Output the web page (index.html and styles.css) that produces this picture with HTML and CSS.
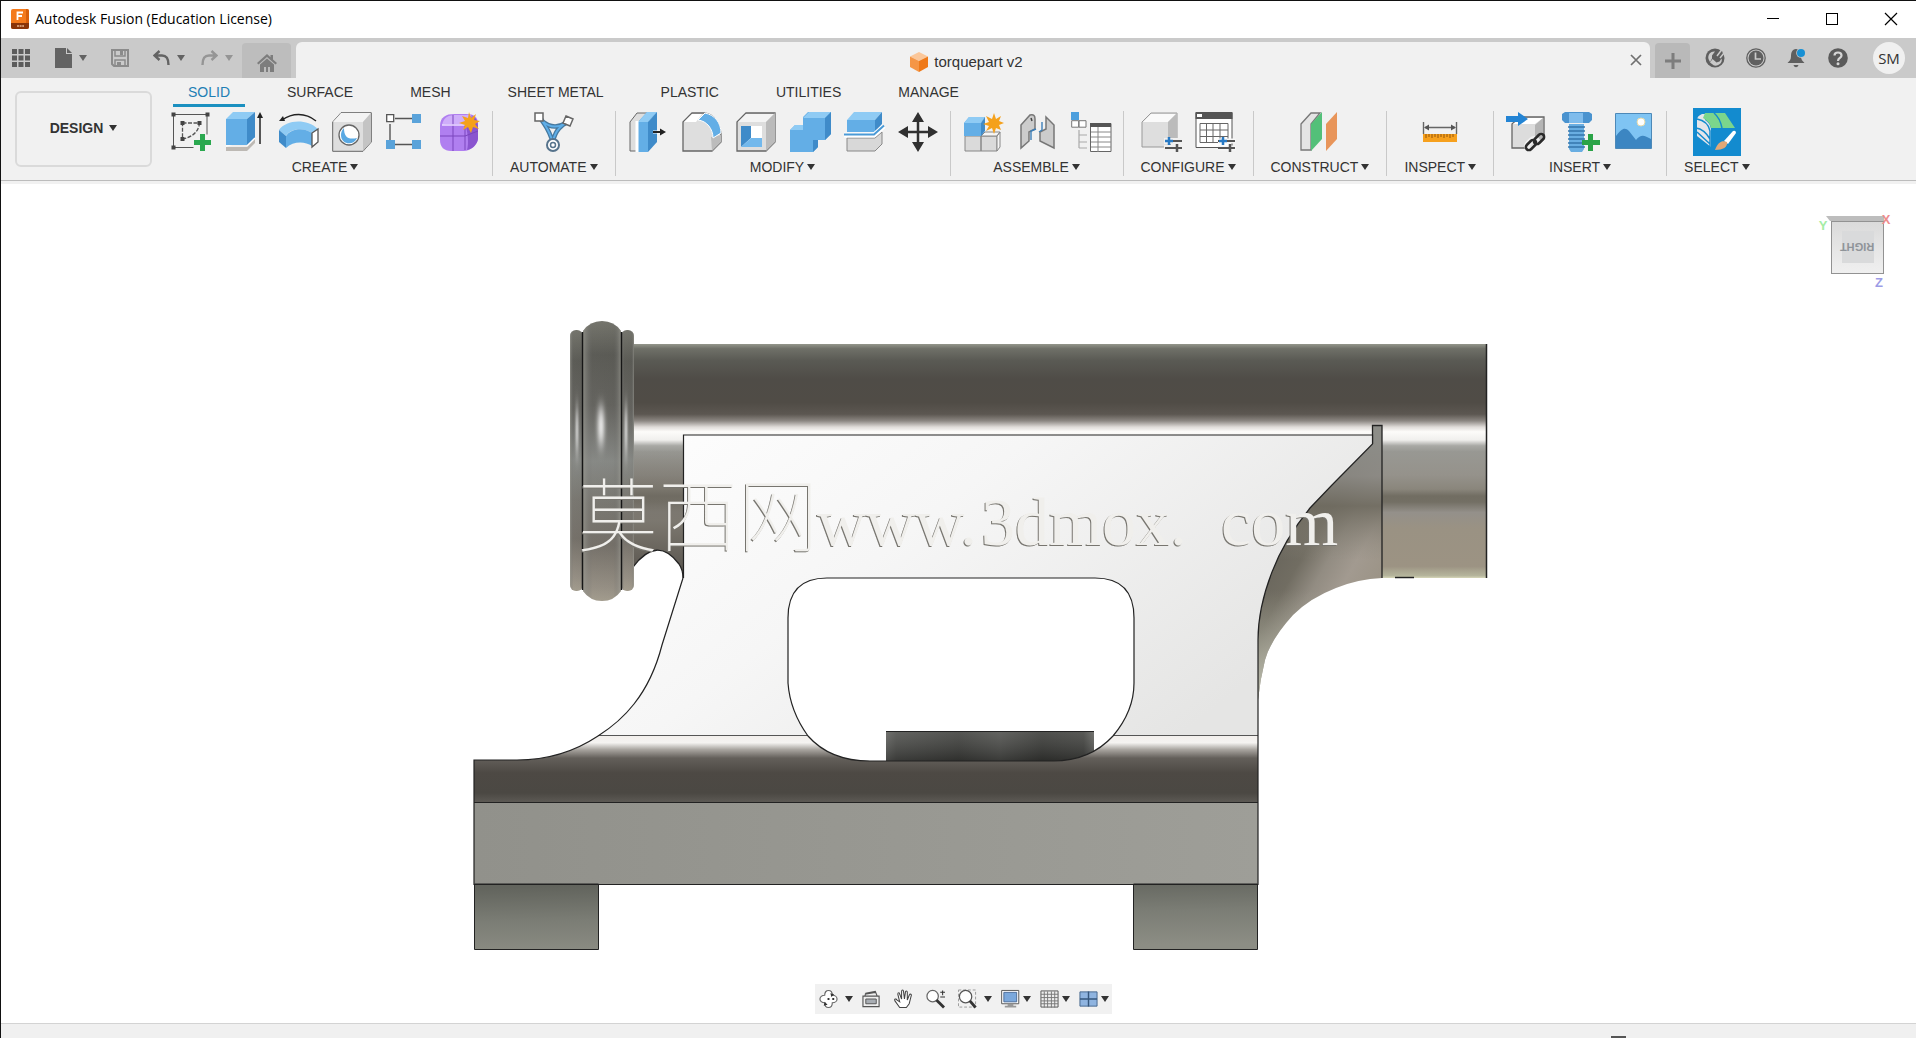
FILE: index.html
```html
<!DOCTYPE html>
<html lang="en">
<head>
<meta charset="utf-8">
<title>Autodesk Fusion (Education License)</title>
<link rel="stylesheet" href="styles.css">
</head>
<body>
<header class="titlebar">
  <svg class="logo" width="18" height="20" viewBox="0 0 18 20"><rect width="18" height="20" rx="2" fill="#f47a1c"/><path d="M0 14h18v4a2 2 0 0 1-2 2H2a2 2 0 0 1-2-2z" fill="#8a3408"/><path d="M15 0h1a2 2 0 0 1 2 2v12h-3z" fill="#d95f0b"/><path d="M6.500 11V3.500H12M6.500 7H11" fill="none" stroke="#fff" stroke-width="1.800"/><path d="M6 17h7" stroke="#e8b48e" stroke-width="1.500" stroke-dasharray="2 .6"/></svg>
  <span class="app-name">Autodesk Fusion (Education License)</span>
  <div class="window-buttons">
    <button aria-label="Minimize"><svg width="14" height="14" viewBox="0 0 14 14"><path d="M1 6.500h12" stroke="#000"/></svg></button>
    <button aria-label="Maximize"><svg width="14" height="14" viewBox="0 0 14 14"><rect x="1.500" y="1.500" width="11" height="11" fill="none" stroke="#000"/></svg></button>
    <button aria-label="Close"><svg width="14" height="14" viewBox="0 0 14 14"><path d="M1 1l12 12M13 1L1 13" stroke="#000" stroke-width="1.200"/></svg></button>
  </div>
</header>

<nav class="tabbar">
  <div class="quick">
    <button aria-label="Data panel"><svg width="20" height="20" viewBox="0 0 20 20" fill="#5c5c5c"><path d="M1 1h5v5H1zM7.500 1h5v5h-5zM14 1h5v5h-5zM1 7.500h5v5H1zM7.500 7.500h5v5h-5zM14 7.500h5v5h-5zM1 14h5v5H1zM7.500 14h5v5h-5zM14 14h5v5h-5z"/></svg></button>
    <button aria-label="File"><svg width="17" height="20" viewBox="0 0 17 20" fill="#636363"><path d="M0 0h11v6h6v14H0z"/><path d="M12 0l5 5h-5z"/></svg><i class="caret"></i></button>
    <button aria-label="Save"><svg width="18" height="18" viewBox="0 0 18 18"><path d="M1 1h16v16H3l-2-2z" fill="none" stroke="#8b8b8b" stroke-width="2"/><path d="M4 1v6h10V1M4 17v-6h10v6" fill="none" stroke="#8b8b8b" stroke-width="1.500"/><path d="M9 1h3v5H9zM6 13h4v4H6z" fill="#8b8b8b"/></svg></button>
    <div class="history">
      <button aria-label="Undo"><svg width="17" height="16" viewBox="0 0 17 16" fill="none" stroke="#636363" stroke-width="2.400"><path d="M6.500 1L1.500 5.500l5 4.500M1.500 5.500H9c4.500 0 6.500 3 6.500 9.500"/></svg><i class="caret"></i></button>
      <button aria-label="Redo" class="dim"><svg width="17" height="16" viewBox="0 0 17 16" fill="none" stroke="#959595" stroke-width="2.400"><path d="M10.500 1l5 4.500-5 4.500M15.500 5.500H8C3.500 5.500 1.500 8.500 1.500 15"/></svg><i class="caret"></i></button>
    </div>
  </div>
  <button class="home-tab" aria-label="Home"><svg width="20" height="18" viewBox="0 0 20 18" fill="#7d7d7d"><path d="M10 0L0 9l1.500 1.500L10 3l8.500 7.500L20 9l-4-3.600V1h-2.500v2.200zM3 10.500V18h4v-5h2v5h2v-5h2v5h4v-7.500l-7-6z"/></svg></button>
  <div class="doc-tab">
    <span class="doc-title"><svg width="18" height="20" viewBox="0 0 18 20"><path d="M9 0l9 4.500L9 9 0 4.500z" fill="#fbc79a"/><path d="M0 4.500L9 9v11l-9-5z" fill="#f59646"/><path d="M18 4.500L9 9v11l9-5z" fill="#ef7918"/></svg>torquepart v2</span>
    <button aria-label="Close tab"><svg width="12" height="12" viewBox="0 0 12 12"><path d="M1 1l10 10M11 1L1 11" stroke="#707070" stroke-width="1.700"/></svg></button>
  </div>
  <button class="new-tab" aria-label="New tab"><svg width="16" height="16" viewBox="0 0 16 16"><path d="M8 0v16M0 8h16" stroke="#7d7d7d" stroke-width="3"/></svg></button>
  <div class="account">
    <button aria-label="Extensions"><svg width="20" height="20" viewBox="0 0 20 20"><circle cx="10" cy="10" r="9.500" fill="#5f5f5f"/><path d="M3.500 11C2.500 6 6 3 10 3.500L7 7.500v3L5 14zM9 17.500l-4-3 2.500-3.500 4 3.500 3-1 2-3c1.500 4-3 8-7.500 7z" fill="#cacaca"/><path d="M12 8l4.500-6M15 10l4-5" stroke="#cacaca" stroke-width="1.500"/></svg></button>
    <button aria-label="Job status"><svg width="20" height="20" viewBox="0 0 20 20"><circle cx="10" cy="10" r="9.200" fill="none" stroke="#5f5f5f" stroke-width="1.300"/><circle cx="10" cy="10" r="7.500" fill="#5f5f5f"/><path d="M9.500 4.500V11H15" fill="none" stroke="#cacaca" stroke-width="1.700"/></svg></button>
    <button aria-label="Notifications"><svg width="20" height="20" viewBox="0 0 20 20"><path d="M9 1c4 0 5 4 5 7.500 0 3 1.500 4.500 3.500 6.500h-17C2.500 13 4 11.500 4 8.500 4 5 5 1 9 1zM6.500 17h5c-1 3-4 3-5 0z" fill="#5f5f5f"/><circle cx="14" cy="5" r="4.800" fill="#cacaca"/><circle cx="14" cy="5" r="4" fill="#1790d4"/></svg></button>
    <button aria-label="Help"><svg width="20" height="20" viewBox="0 0 20 20"><circle cx="10" cy="10" r="9.800" fill="#5a5a5a"/><path d="M6.500 7.500C6.500 3.500 13.500 3.500 13.500 7.500 13.500 10 10 10 10 13" fill="none" stroke="#d5d5d5" stroke-width="2.200"/><circle cx="10" cy="15.700" r="1.500" fill="#d5d5d5"/></svg></button>
    <button class="avatar">SM</button>
  </div>
</nav>

<section class="ribbon">
  <button class="workspace">DESIGN<i class="caret"></i></button>
  <div class="tools">
    <div class="tool-tabs">
      <button class="active">SOLID</button><button>SURFACE</button><button>MESH</button><button>SHEET METAL</button><button>PLASTIC</button><button>UTILITIES</button><button>MANAGE</button>
    </div>
    <div class="groups">
      <div class="group">
        <div class="icons">
          <button aria-label="Create sketch"><svg viewBox="0 0 40 40"><path d="M3.500 2.500h33.500v20M3.500 2.500v33h20" fill="none" stroke="#555"/><path d="M12.500 11h17c-1 9-7 14-17 16z" fill="none" stroke="#555" stroke-width="1.300" stroke-dasharray="4 1.500"/><path d="M1.500.5h4v4h-4zM35.500.5h4v4h-4zM1.500 33.500h4v4h-4zM10.500 9h4v4h-4zM27.500 9h4v4h-4zM10.500 25h4v4h-4z" fill="#444"/><path d="M30 22h5v6h6v5h-6v6h-5v-6h-6v-5h6z" fill="#2aa84f"/></svg></button>
          <button aria-label="Extrude"><svg viewBox="0 0 40 40"><path d="M2 35v4h21l8-8v-5z" fill="#bdb9b4"/><path d="M2 7l7-7h22l-8 7z" fill="#8fcbf4"/><path d="M2 7h21v26H2z" fill="#63aee6"/><path d="M23 7l8-7v26l-8 7z" fill="#3f8bc9"/><path d="M2 34h21l8-8" fill="none" stroke="#fff" stroke-width="1.500"/><path d="M36 32V3" stroke="#222" stroke-width="1.500"/><path d="M36 0l3 6h-6z" fill="#222"/></svg></button>
          <button aria-label="Revolve"><svg viewBox="0 0 40 40"><path d="M1 18C8 8 28 6 40 17l-6 4C26 15 12 16 8 24z" fill="#8fcbf4"/><path d="M1 18l7 6v12l-7-6z" fill="#3f8bc9"/><path d="M8 24c5-8 18-9 26-3v13c-7-5-19-5-26 2z" fill="#63aee6"/><path d="M40 17v13l-6 5V21z" fill="#fff" stroke="#555" stroke-width="1.300"/><path d="M4 8C14 1 27 0 38 9" fill="none" stroke="#222" stroke-width="1.400"/><path d="M1 9l4-5 2 5z" fill="#222"/></svg></button>
          <button aria-label="Hole"><svg viewBox="0 0 40 40"><path d="M.7 10L9 .7h30.300V30L31 39.300H.7z" fill="#dedede" stroke="#666"/><path d="M1 10L9 1h30l-8 9z" fill="#f3f3f3"/><path d="M31 10l8-9v29l-8 9z" fill="#c4c4c4"/><circle cx="17" cy="23" r="10" fill="#fff" stroke="#666" stroke-width="1.300"/><path d="M12 16c0 9 4 12 13 10-3 8-16 7-16-3 0-3 1-5 3-7z" fill="#5aa9e3"/></svg></button>
          <button aria-label="Pattern"><svg viewBox="0 0 40 40"><path d="M9 6.500h18M4 12v18M9 32.500h18" stroke="#555" stroke-width="1.400"/><path d="M.7 2.700h7v7h-7z" fill="#fff" stroke="#555" stroke-width="1.300"/><path d="M26 2h9v9h-9zM0 28h9v9H0zM26 28h9v9h-9z" fill="#5aa3da"/></svg></button>
          <button aria-label="Create form"><svg viewBox="0 0 40 40"><path d="M0 14C0 5 6 2 14 2h12c8 0 12 3 12 10v14c0 7-8 13-14 13H11C4 39 0 35 0 28z" fill="#b07ff0"/><path d="M2 13c2-8 6-10 15-10h14l-6 9H6z" fill="#cfaefa"/><path d="M25 12l8-8c4 3 5 6 5 11v12c-1 6-6 10-11 11 2-6 1-18-2-26z" fill="#8a55cf"/><path d="M13 3v36M0 24h25l13-5M25 12v26" fill="none" stroke="#7b46bd"/><path d="M2 13h22l7-7" fill="none" stroke="#eadcff" stroke-width="1.500"/><path d="M29 0l2 6 5-4-2 6 6 1-5 3 4 5-6-2-2 6-3-6-5 3 2-5-6-2 6-2-3-5 6 2z" fill="#f5a11b"/></svg></button>
        </div>
        <button class="menu">CREATE<i class="caret"></i></button>
      </div>
      <div class="group">
        <div class="icons">
          <button aria-label="Automate"><svg viewBox="0 0 40 40"><path d="M7 7c5 8 8 10 12 24M34 8c-8 9-11 6-16 24M8 9c8 7 16 7 24 2" fill="none" stroke="#46799f" stroke-width="4.500"/><path d="M7 7c5 8 8 10 12 24M34 8c-8 9-11 6-16 24M8 9c8 7 16 7 24 2" fill="none" stroke="#5eaee8" stroke-width="2"/><circle cx="19" cy="33" r="6" fill="#fff" stroke="#56738c" stroke-width="2"/><circle cx="19" cy="33" r="2.500" fill="none" stroke="#56738c" stroke-width="1.500"/><path d="M1 1h8v8H1zM32 4l7 3-3 7-7-3z" fill="#fff" stroke="#666" stroke-width="1.500"/></svg></button>
        </div>
        <button class="menu">AUTOMATE<i class="caret"></i></button>
      </div>
      <div class="group">
        <div class="icons">
          <button aria-label="Press pull"><svg viewBox="0 0 40 40"><path d="M2 10L9 1h10l-8 9v29H2z" fill="#dedede" stroke="#666"/><path d="M10 10l9-10h10l-9 10v30H10z" fill="#63aee6"/><path d="M10 10l9-10h10l-9 10z" fill="#8fcbf4"/><path d="M20 10L29 0v30l-9 10z" fill="#3f8bc9"/><path d="M9 9v31M25 20h12" stroke="#fff" stroke-width="3"/><path d="M25 20h9" stroke="#222" stroke-width="2"/><path d="M32 16.500l6 3.500-6 3.500z" fill="#222"/></svg></button>
          <button aria-label="Fillet"><svg viewBox="0 0 40 40"><path d="M1 10L10 1h12c10 1 17 11 17 23v6l-9 9H1z" fill="#dedede" stroke="#666" stroke-width="1.300"/><path d="M29 25l10-2v7l-9 9z" fill="#bcbcbc"/><path d="M2 10l8-8h10l-6 8z" fill="#fff"/><path d="M16 8l7-7c10 2 16 10 16 20l-8 5C31 17 25 9 16 8z" fill="#63aee6" stroke="#fff"/></svg></button>
          <button aria-label="Shell"><svg viewBox="0 0 40 40"><path d="M1 10L10 1h29v29l-9 9H1z" fill="#dedede" stroke="#666" stroke-width="1.300"/><path d="M2 10l8-8h28l-8 8z" fill="#f4f4f4"/><path d="M30 10l9-9v29l-9 9z" fill="#bbb"/><path d="M5 14h21v21H5z" fill="#fff"/><path d="M5 14h10v12L5 35z" fill="#3f8bc9"/><path d="M15 26h11v9H5z" fill="#72b8ec"/></svg></button>
          <button aria-label="Combine"><svg viewBox="0 0 40 40"><path d="M0 18l5-5h8V5l5-5h23v22l-6 6h-7v7l-5 5H0z" fill="#63aee6"/><path d="M0 18l5-5h8v5zM13 6l6-6h22l-6 6z" fill="#8fcbf4"/><path d="M35 6l6-6v22l-6 6zM28 28v7l-5 5V28z" fill="#3f8bc9"/></svg></button>
          <button aria-label="Split body"><svg viewBox="0 0 40 40"><path d="M3 26h28l7-6v12l-7 7H3z" fill="#d8d8d8" stroke="#888"/><path d="M3 8l7-8h28l-7 8z" fill="#8fcbf4"/><path d="M3 8h28v12H3z" fill="#63aee6"/><path d="M31 8l7-8v12l-7 8z" fill="#3f8bc9"/><path d="M0 23h30l10-9" fill="none" stroke="#fff" stroke-width="5"/><path d="M0 22.500h30l10-9" fill="none" stroke="#4a9ad6" stroke-width="2"/></svg></button>
          <button aria-label="Move"><svg viewBox="0 0 40 40"><path d="M20 4v32M4 20h32" stroke="#303030" stroke-width="2.500"/><path d="M20 0l6 10H14zM20 40l6-10H14zM0 20l10-6v12zM40 20l-10-6v12z" fill="#303030"/></svg></button>
        </div>
        <button class="menu">MODIFY<i class="caret"></i></button>
      </div>
      <div class="group">
        <div class="icons">
          <button aria-label="New component"><svg viewBox="0 0 40 40"><path d="M2 24h16v15H2zM18 24h16v15H18z" fill="#dadada" stroke="#888"/><path d="M18 24l4-4h15l-3 4zM34 24l3-4v15l-3 4z" fill="#f5f5f5" stroke="#888"/><path d="M1 11l5-6h16l-4 6v13H1z" fill="#63aee6"/><path d="M1 11l5-6h16l-4 6z" fill="#8fcbf4"/><path d="M18 11l4-6v14l-4 5z" fill="#3f8bc9"/><path d="M31 1l2 6 5-3-2 5 5 2-5 2 2 5-5-2-2 6-2-6-6 3 3-5-6-2 6-2-3-6 6 3z" fill="#f5a11b"/></svg></button>
          <button aria-label="Joint"><svg viewBox="0 0 40 40"><path d="M4 13L13 3c4-1 5 1 5 4v10l-6 3v9L4 36z" fill="#ccc" stroke="#777" stroke-width="1.500"/><path d="M37 6L28 14v0l-5 5v9l14 8z" fill="none"/><path d="M29 5l8 8v23l-14-7v-9l6-3z" fill="#ccc" stroke="#777" stroke-width="1.500"/><path d="M14 28v-9l5-2M25 10v8l-3 2" fill="none" stroke="#3d7fb8" stroke-width="1.400"/><path d="M14 6l1 3" stroke="#444" stroke-width="1.500"/></svg></button>
          <button aria-label="Bill of materials"><svg viewBox="0 0 40 40"><path d="M0 0h8v8H0z" fill="#4d9fdd"/><path d="M.7 8.700h7v6.500h-7zM8 8.700h7v6.500H8z" fill="#fff" stroke="#777"/><path d="M8 18v18M8 23h8M8 30h8M8 36h8" stroke="#aaa" stroke-width="1.200" fill="none"/><path d="M19.500 11.500H40v28H19.500z" fill="#fff" stroke="#666"/><path d="M19 11h21v4H19z" fill="#555"/><path d="M20 20h20M20 25h20M20 30h20M20 35h20M27 15v25" stroke="#888"/></svg></button>
        </div>
        <button class="menu">ASSEMBLE<i class="caret"></i></button>
      </div>
      <div class="group">
        <div class="icons">
          <button aria-label="Configure model"><svg viewBox="0 0 40 40"><path d="M1 10l9-9h26v25l-9 9H1z" fill="#dedede" stroke="#999"/><path d="M2 10l8-8h25l-8 8z" fill="#fafafa"/><path d="M27 10l9-9v25l-9 9z" fill="#bbb"/><path d="M23 29h18M23 36h18" stroke="#f0f0f0" stroke-width="6"/><path d="M24 29h17M24 36h17" stroke="#555" stroke-width="2"/><path d="M28 25v8M24 29h8" stroke="#2779c4" stroke-width="2.500"/><path d="M36 32v8" stroke="#555" stroke-width="2.500"/></svg></button>
          <button aria-label="Configuration table"><svg viewBox="0 0 40 40"><path d="M1 35.500V1h36v34.500z" fill="#fff" stroke="#555"/><path d="M.500 0h37v7H.500z" fill="#555"/><path d="M2 2h5v3H2z" fill="#fff"/><path d="M5 11.500h28v19H5zM5 18h28M5 24.500h28M11.500 11.500v19M18 11.500v19M25 11.500v19" fill="none" stroke="#666"/><path d="M23 29h18M23 36h18" stroke="#f6f6f6" stroke-width="5"/><path d="M23 29h17M23 36h17" stroke="#555" stroke-width="2"/><path d="M28 25v8M24 29h8" stroke="#2779c4" stroke-width="2.500"/><path d="M35 32v8" stroke="#555" stroke-width="2.500"/></svg></button>
        </div>
        <button class="menu">CONFIGURE<i class="caret"></i></button>
      </div>
      <div class="group">
        <div class="icons">
          <button aria-label="Offset plane"><svg viewBox="0 0 40 40"><path d="M1 12L11 1h9l-9 11v26H1z" fill="#e4e4e4" stroke="#777" stroke-width="1.300"/><path d="M11 12L22 0v27L11 39z" fill="#53c079"/><path d="M26 12L37 0v27L26 39z" fill="#e8955a"/></svg></button>
        </div>
        <button class="menu">CONSTRUCT<i class="caret"></i></button>
      </div>
      <div class="group">
        <div class="icons">
          <button aria-label="Measure"><svg viewBox="0 0 40 40"><path d="M3.500 10v12M36.500 10v12M5 15.500h30" stroke="#666" stroke-width="1.400"/><path d="M4 15.500l5-3v6zM36 15.500l-5-3v6z" fill="#555"/><path d="M3 22h34v8H3z" fill="#f6a01d"/><path d="M6 22v4M9 22v3M12 22v4M15 22v3M18 22v4M21 22v3M24 22v4M27 22v3M30 22v4M33 22v3" stroke="#94550b"/></svg></button>
        </div>
        <button class="menu">INSPECT<i class="caret"></i></button>
      </div>
      <div class="group">
        <div class="icons">
          <button aria-label="Insert derive"><svg viewBox="0 0 40 40"><path d="M6 12l8-7h24v22l-9 9H6z" fill="#dcdcdc" stroke="#666" stroke-width="1.300"/><path d="M7 12l8-6h22l-8 6z" fill="#fff"/><path d="M29 13l8-7v21l-8 8z" fill="#b5b5b5"/><path d="M0 4h12V0l10 7-10 7v-4H0z" fill="#2384d4"/><g fill="none" stroke="#f0f0f0" stroke-width="6"><rect x="20" y="29" width="12" height="7" rx="3.500" transform="rotate(-45 26 32)"/></g><g fill="none" stroke="#2b2b2b" stroke-width="2.500"><rect x="19" y="30" width="12" height="6" rx="3" transform="rotate(-45 25 33)"/><rect x="27" y="24" width="12" height="6" rx="3" transform="rotate(-45 33 27)"/></g></svg></button>
          <button aria-label="Insert fastener"><svg viewBox="0 0 40 40"><path d="M2 2l3-2h24l3 2v6l-3 3H5L2 8z" fill="#4a93cf"/><path d="M9 1h14v10H9z" fill="#7fbcec"/><path d="M9 12h15v25l-2 3H11l-2-3z" fill="#69aee2"/><path d="M8 15h17M8 19h17M8 23h17M8 27h17M8 31h17M8 35h17" stroke="#3576ac" stroke-width="1.300"/><path d="M28 22h5v6h7v5h-7v6h-5v-6h-6v-5h6z" fill="#2aa347"/></svg></button>
          <button aria-label="Insert image"><svg viewBox="0 0 40 40"><path d="M1.500 1.500h36v35h-36z" fill="#7fc4f3" stroke="#4d89b8"/><path d="M2 24c6-8 9-9 13-5l7 9c5-6 8-5 15-1v9H2z" fill="#3c86c2"/><circle cx="27" cy="10" r="4" fill="#fff" stroke="#e6d9a8"/></svg></button>
        </div>
        <button class="menu">INSERT<i class="caret"></i></button>
      </div>
      <div class="group">
        <div class="icons">
          <button class="selected" aria-label="Select"><svg viewBox="0 0 48 48"><path d="M4 12q0-4 5-6h7q-5 3-4 6 5 3 6 9v18L4 28z" fill="#e6e6ea"/><path d="M12 5h20l10 15H18q-1-6-8-10z" fill="#7bd68c"/><path d="M4 11q11 2 13 12v16M3 20q8 1 14 11M21 5q6 5 8 15M4 24l13 12" fill="none" stroke="#138bcf" stroke-width="1.500"/><path d="M31 33l9-10q3-1 3 2l-8 11z" fill="#fff"/><path d="M22 42c3-8 7-10 12-8 1 5-4 8-12 8z" fill="#e1a877"/></svg></button>
        </div>
        <button class="menu">SELECT<i class="caret"></i></button>
      </div>
    </div>
  </div>
</section>

<main class="viewport">
  <svg class="scene" viewBox="1 184 1915 839" role="img" aria-label="Right view of torquepart v2">
    <defs>
      <linearGradient id="barrel" gradientUnits="userSpaceOnUse" x1="0" y1="344" x2="0" y2="578">
        <stop offset="0" stop-color="#94968b"/><stop offset=".02" stop-color="#6f7068"/><stop offset=".07" stop-color="#5a5a54"/><stop offset=".15" stop-color="#4f4c47"/><stop offset=".25" stop-color="#504c46"/><stop offset=".3" stop-color="#5c5751"/><stop offset=".328" stop-color="#8b8681"/><stop offset=".355" stop-color="#e0dcd9"/><stop offset=".375" stop-color="#fdfcfa"/><stop offset=".41" stop-color="#f0efed"/><stop offset=".435" stop-color="#a8a8a4"/><stop offset=".46" stop-color="#989893"/><stop offset=".56" stop-color="#95928b"/><stop offset=".62" stop-color="#8a867c"/><stop offset=".65" stop-color="#716d62"/><stop offset=".675" stop-color="#736f64"/><stop offset=".72" stop-color="#94908a"/><stop offset=".79" stop-color="#9a9283"/><stop offset=".95" stop-color="#9c9383"/><stop offset=".99" stop-color="#b5b59c"/><stop offset="1" stop-color="#d6d6b8"/>
      </linearGradient>
      <linearGradient id="shade" x1="0" y1="0" x2="0" y2="1"><stop offset="0" stop-color="#5a554e" stop-opacity="0"/><stop offset=".3" stop-color="#6b675f" stop-opacity=".5"/><stop offset=".55" stop-color="#79756d" stop-opacity=".9"/><stop offset="1" stop-color="#55514b"/></linearGradient>
      <linearGradient id="plate" x1="0" y1="0" x2="1" y2=".5"><stop offset="0" stop-color="#fefefe"/><stop offset=".45" stop-color="#f6f6f6"/><stop offset="1" stop-color="#e5e5e4"/></linearGradient>
      <linearGradient id="skirt" gradientUnits="userSpaceOnUse" x1="0" y1="736" x2="0" y2="803"><stop offset="0" stop-color="#f2efec"/><stop offset=".1" stop-color="#f5f3f1"/><stop offset=".2" stop-color="#aaa6a1"/><stop offset=".33" stop-color="#635f5a"/><stop offset=".55" stop-color="#4d4944"/><stop offset=".85" stop-color="#4b4843"/><stop offset="1" stop-color="#5e5b56"/></linearGradient>
      <linearGradient id="slab" x1="0" x2="1" y1="0" y2="0"><stop offset="0" stop-color="#91918b"/><stop offset="1" stop-color="#9e9e98"/></linearGradient>
      <linearGradient id="foot" x1=".3" y1="0" x2=".5" y2="1"><stop offset="0" stop-color="#62645d"/><stop offset=".5" stop-color="#7b7d75"/><stop offset="1" stop-color="#8c8d84"/></linearGradient>
      <linearGradient id="puck" x1="0" x2="1" y1="0" y2="0"><stop offset="0" stop-color="#6f706c"/><stop offset=".05" stop-color="#595a56"/><stop offset=".35" stop-color="#464743"/><stop offset=".55" stop-color="#5a5b57"/><stop offset=".75" stop-color="#40413d"/><stop offset=".95" stop-color="#4b4c48"/><stop offset="1" stop-color="#73746f"/></linearGradient>
      <linearGradient id="puckShade" x1="0" y1="0" x2="0" y2="1"><stop offset="0" stop-color="#777" stop-opacity=".3"/><stop offset="1" stop-color="#111" stop-opacity=".45"/></linearGradient>
      <linearGradient id="ring" x1="0" x2="0" y1="0" y2="1"><stop offset="0" stop-color="#77776e"/><stop offset=".12" stop-color="#5b5b55"/><stop offset=".3" stop-color="#65645f"/><stop offset=".5" stop-color="#8b8d89"/><stop offset=".65" stop-color="#7c7a73"/><stop offset=".8" stop-color="#77726a"/><stop offset=".95" stop-color="#9b9488"/><stop offset="1" stop-color="#aaa393"/></linearGradient>
      <linearGradient id="round" x1="0" x2="1" y1="0" y2="0"><stop offset="0" stop-color="#9a9a92" stop-opacity=".7"/><stop offset=".25" stop-color="#666" stop-opacity=".1"/><stop offset=".8" stop-color="#555" stop-opacity=".1"/><stop offset="1" stop-color="#a0a098" stop-opacity=".6"/></linearGradient>
      <linearGradient id="fillet" gradientUnits="userSpaceOnUse" x1="1275" y1="530" x2="1382" y2="590"><stop offset="0" stop-color="#66635a"/><stop offset=".3" stop-color="#716d62"/><stop offset=".5" stop-color="#928c82"/><stop offset=".7" stop-color="#a29a90"/><stop offset="1" stop-color="#9a9284"/></linearGradient>
      <linearGradient id="filletTop" gradientUnits="userSpaceOnUse" x1="0" y1="440" x2="0" y2="560"><stop offset="0" stop-color="#8d8d88"/><stop offset=".3" stop-color="#8b8984" stop-opacity=".9"/><stop offset=".55" stop-color="#6f6b60" stop-opacity=".9"/><stop offset="1" stop-color="#8a857a" stop-opacity="0"/></linearGradient>
      <linearGradient id="filletEnd" gradientUnits="userSpaceOnUse" x1="0" y1="590" x2="0" y2="690"><stop offset="0" stop-color="#a8a898" stop-opacity="0"/><stop offset="1" stop-color="#b6b7a8"/></linearGradient>
      <linearGradient id="cube" x1="0" x2="0" y1="0" y2="1"><stop offset="0" stop-color="#dadada"/><stop offset="1" stop-color="#f0f0f0"/></linearGradient>
      <filter id="soft" x="-200%" y="-50%" width="500%" height="200%"><feGaussianBlur stdDeviation="2 8"/></filter>
      <filter id="fine" x="-200%" y="-50%" width="500%" height="200%"><feGaussianBlur stdDeviation="1 10"/></filter>
      <path id="web" d="M1372 425h10v153q-24 1-46 10-26 10-43 27-22 24-28 45-5 20-7 40V444h114z"/>
    </defs>

    <!-- barrel -->
    <rect x="633" y="344" width="853" height="234" fill="url(#barrel)"/>
    <rect x="633" y="450" width="50" height="128" fill="url(#shade)"/>
    <path d="M1486.500 344v234M1395 577.500h19" stroke="#222" stroke-width="1.500"/>
    <!-- fillet behind the plate -->
    <use href="#web" fill="url(#fillet)"/>
    <use href="#web" fill="url(#filletTop)"/>
    <use href="#web" fill="url(#filletEnd)"/>
    <path d="M1372.500 444v-18.500h9.500v152.500" fill="none" stroke="#222" stroke-width="1.300"/>
    <!-- groove between barrel and foot -->
    <path d="M633 579v-12q24-32 46-3 4 6 4 15z" fill="#fff"/>
    <path d="M633 567q24-32 46-3 4 6 4 14" fill="none" stroke="#222" stroke-width="1.300"/>
    <!-- rings -->
    <g>
      <rect x="570" y="330" width="13" height="261" rx="6" fill="url(#ring)"/><rect x="570" y="330" width="13" height="261" rx="6" fill="url(#round)"/>
      <rect x="621" y="330" width="13" height="261" rx="6" fill="url(#ring)"/><rect x="621" y="330" width="13" height="261" rx="6" fill="url(#round)"/>
      <path d="M583 331q7-10 19-10t19 10v260q-7 10-19 10t-19-10z" fill="url(#ring)"/><path d="M583 331q7-10 19-10t19 10v260q-7 10-19 10t-19-10z" fill="url(#round)"/>
      <path d="M582.500 332v258M621.500 332v258" stroke="#161616" stroke-width="1.500"/>
      <g fill="#fff"><ellipse cx="577" cy="430" rx="1" ry="24" filter="url(#fine)"/><ellipse cx="626" cy="430" rx="1" ry="26" filter="url(#fine)"/><ellipse cx="601" cy="426" rx="3" ry="20" filter="url(#soft)"/></g>
    </g>
    <!-- plate -->
    <path d="M683 435h689.500v9L1332 485l-22 23Q1284 540 1272 572 1258 608 1258 640v96H598Q620 722 634 704 653 680 662 645L683 578zM827 578Q788 578 788 618v65Q790 711 808 736h305Q1134 711 1134 683v-65Q1134 578 1095 578z" fill="url(#plate)" fill-rule="evenodd"/>
    <!-- pad seen through the opening -->
    <rect x="886" y="731" width="208" height="30" fill="url(#puck)"/><rect x="886" y="731" width="208" height="30" fill="url(#puckShade)"/>
    <path d="M886 731.500h208" stroke="#222"/>
    <!-- rounded skirt -->
    <path d="M474 760h43Q562 760 598 736h210Q830 761 870 761h183Q1090 761 1113 736h145v67H474z" fill="url(#skirt)"/>
    <path d="M598 735.500h210M1114 735.500h144" stroke="#555"/>
    <!-- base slab and feet -->
    <rect x="474" y="803" width="784" height="82" fill="url(#slab)"/>
    <path d="M474.500 884h124v65.500h-124zM1133.500 884h124v65.500h-124z" fill="url(#foot)" stroke="#222"/>
    <path d="M474 802.500h784M474 884.500h784" stroke="#222" stroke-width="1.200"/>
    <path d="M827 578Q788 578 788 618v65Q790 711 808 736 830 761 870 761h183Q1090 761 1113 736 1134 711 1134 683v-65Q1134 578 1095 578z" fill="none" stroke="#222" stroke-width="1.200"/>
    <path d="M683.500 578V435h689v9L1332 485l-22 23Q1284 540 1272 572 1258 608 1258 640v245M683 578L662 645Q653 680 634 704 620 722 598 736 562 760 517 760h-43v125" fill="none" stroke="#222" stroke-width="1.200"/>

    <text class="watermark" x="578" y="545"><tspan class="han">莫西网</tspan><tspan x="817">www. </tspan><tspan x="981">3dmox. </tspan><tspan x="1221">com</tspan></text>

    <!-- view cube -->
    <path d="M1826 216h58v5h-54z" fill="#bdbdbd"/>
    <rect x="1831.500" y="221.500" width="52" height="52" fill="url(#cube)" stroke="#929292"/>
    <rect x="1842" y="231" width="32" height="32" fill="#d9dadb"/>
    <text class="cube-face" x="1857" y="247" transform="rotate(180 1857 247)" dy="4">RIGHT</text>
    <text class="axis axis-x" x="1886" y="224">X</text>
    <text class="axis axis-y" x="1823" y="230">Y</text>
    <text class="axis axis-z" x="1879" y="287">Z</text>
  </svg>

  <div class="navbar">
    <button class="wide" aria-label="Orbit"><svg viewBox="0 0 20 20"><path d="M10 1c3 0 4 3 4 5 3 0 5 2 5 4s-2 4-5 4c0 3-1 5-4 5s-4-2-4-5c-3 0-5-2-5-4s2-4 5-4c0-2 1-5 4-5z" fill="#fff" stroke="#666" stroke-width="1.200"/><path d="M9 9h2v2H9zM12 4l4 1-3 3zM14 9h2v2h-2zM6 13l3 3-4 1z" fill="#333"/></svg><i class="caret"></i></button>
    <button aria-label="Look at"><svg viewBox="0 0 20 20"><path d="M1 7h17v11H1zM3 7l1-3 10-2 2 5M3 5l11-2" fill="#eee" stroke="#555" stroke-width="1.200"/><path d="M4 10h11v5H4z" fill="#a8adb3" stroke="#555"/></svg></button>
    <button aria-label="Pan"><svg viewBox="0 0 20 20"><path d="M6 19L1 12c-1-2 1-3 2-1l3 2-2-8c0-2 2-2 2 0l2 5V2c0-2 2-2 2 0l1 8 1-7c0-2 2-2 2 0v8l2-5c1-2 3-1 2 1l-2 8-3 4z" fill="#fff" stroke="#444" stroke-width="1.100"/></svg></button>
    <button aria-label="Zoom"><svg viewBox="0 0 20 20"><circle cx="7" cy="7" r="6" fill="#fff" stroke="#666" stroke-width="1.300"/><path d="M11 11l8 8" stroke="#333" stroke-width="3"/><path d="M15 3h5M17.500 1v5M15 8h5" stroke="#333" stroke-width="1.100"/></svg></button>
    <button class="wide" aria-label="Zoom window"><svg viewBox="0 0 20 20"><path d="M.5.5h18v18H.5z" fill="none" stroke="#999" stroke-dasharray="3 2"/><circle cx="8" cy="7.500" r="6.500" fill="#fff" stroke="#555" stroke-width="1.300"/><path d="M12.500 12l6 7" stroke="#333" stroke-width="3"/></svg><i class="caret"></i></button>
    <button class="tight" aria-label="Display settings"><svg viewBox="0 0 20 20"><path d="M.7 1h18v14H.7z" fill="#fff" stroke="#555"/><path d="M3 3h13.500v10H3z" fill="#7ba8dc" stroke="#4b6c98"/><path d="M7 15h6v2h3v2H4v-2h3z" fill="#999"/></svg><i class="caret"></i></button>
    <button class="tight" aria-label="Grid and snaps"><svg viewBox="0 0 20 20"><path d="M1 1.500h18v17H1z" fill="#eee" stroke="#555"/><path d="M1 5h18M1 8.500h18M1 12h18M1 15h18M4.500 2v17M8 2v17M12 2v17M15.500 2v17" stroke="#777"/></svg><i class="caret"></i></button>
    <button class="tight" aria-label="Viewports"><svg viewBox="0 0 20 20"><path d="M1 2.500h18v15H1z" fill="#8fb4e0" stroke="#44658c"/><path d="M10 2v16M1 10h18" stroke="#35567c" stroke-width="1.500"/></svg><i class="caret"></i></button>
  </div>
</main>
<footer class="statusbar"><span></span></footer>
</body>
</html>
```
FILE: styles.css
```css
* { box-sizing: border-box; }
body {
  margin: 0;
  height: 100vh;
  display: flex;
  flex-direction: column;
  overflow: hidden;
  border-top: 1px solid #111;
  border-left: 1px solid #111;
  background: #fff;
  color: #333;
  font: 14px/16px "Liberation Sans", Arial, sans-serif;
}
button {
  display: flex;
  align-items: center;
  justify-content: center;
  margin: 0;
  padding: 0;
  border: 0;
  background: none;
  color: inherit;
  font: inherit;
}
svg { display: block; flex: none; }
.caret {
  flex: none;
  border: 4px solid transparent;
  border-top: 6px solid currentColor;
  border-bottom: 0;
}

.titlebar {
  flex: none;
  display: flex;
  align-items: center;
  height: 37px;
  padding: 0 18px 2px 10px;
}
.app-name {
  margin-left: 6px;
  color: #000;
  font: 14px/20px "Open Sans", "Noto Sans", sans-serif;
}
.window-buttons { display: flex; gap: 45px; margin-left: auto; }

.tabbar {
  flex: none;
  display: flex;
  align-items: flex-end;
  height: 40px;
  background: #cacaca;
}
.quick {
  display: flex;
  align-items: center;
  gap: 24px;
  height: 40px;
  padding-left: 10px;
  color: #636363;
}
.quick button { gap: 7px; }
.history { display: flex; gap: 16px; }
.dim { color: #959595; }
.home-tab {
  width: 49px;
  height: 35px;
  margin: 0 5px 0 9px;
  padding-top: 5px;
  border-radius: 4px 4px 0 0;
  background: #bdbdbd;
}
.doc-tab {
  flex: 1;
  display: flex;
  align-items: center;
  height: 36px;
  padding-right: 8px;
  border-radius: 6px 6px 0 0;
  background: #f1f1f1;
}
.doc-title {
  flex: 1;
  display: flex;
  align-items: center;
  justify-content: center;
  gap: 6px;
  padding: 4px 0 0 7px;
  font-size: 15px;
}
.new-tab {
  width: 35px;
  height: 35px;
  margin-left: 5px;
  border-radius: 4px 4px 0 0;
  background: #b9b9b9;
}
.account {
  display: flex;
  align-items: center;
  gap: 21px;
  height: 40px;
  padding: 0 11px 0 15px;
}
.avatar {
  width: 32px;
  height: 32px;
  margin-left: 4px;
  border-radius: 50%;
  background: #f0f0f0;
  font: 15px/20px "Open Sans", sans-serif;
}

.ribbon {
  flex: none;
  display: flex;
  height: 103px;
  border-bottom: 1px solid #bcbcbc;
  background: #f1f1f1;
}
.workspace {
  gap: 6px;
  width: 137px;
  height: 76px;
  margin: 13px 6px 0 14px;
  padding-bottom: 2px;
  border: 2px solid #dadada;
  border-radius: 6px;
  font-weight: bold;
}
.tool-tabs { display: flex; gap: 27px; padding-left: 15px; }
.tool-tabs button {
  height: 29px;
  padding: 2px 15px 0;
  border-bottom: 3px solid transparent;
}
.tool-tabs .active { color: #1e7fb5; border-color: #1b90c0; }
.groups { display: flex; padding-top: 4px; }
.group {
  display: flex;
  flex-direction: column;
  align-items: center;
  height: 65px;
  padding: 1px 12px 0;
  border-right: 1px solid #c9c9c9;
}
.group:last-child { border-right: 0; }
.icons { display: flex; gap: 14px; }
.icons svg { width: 40px; height: 40px; overflow: visible; }
.icons .selected { margin: -4px; background: #138bcf; }
.icons .selected svg { width: 48px; height: 48px; }
.menu { gap: 3px; height: 24px; padding: 5px 5px 0; }

.viewport {
  position: relative;
  flex: 1;
  min-height: 0;
  border-top: 3px solid #f1f1f1;
}
.scene { width: 100%; height: 100%; }
.watermark {
  fill: #f0efec;
  font: 68px "Liberation Serif", serif;
  filter: drop-shadow(-1px 1px 0 #77756f);
}
.han { font: 100 80px "Noto Sans CJK SC", sans-serif; }
.cube-face {
  fill: #8f9499;
  text-anchor: middle;
  font: bold 11px "Liberation Sans", sans-serif;
}
.axis { text-anchor: middle; font: bold 13px "Liberation Sans", sans-serif; }
.axis-x { fill: #ef8d8d; }
.axis-y { fill: #a5eda5; }
.axis-z { fill: #9c9ce6; }
.navbar {
  position: absolute;
  bottom: 9px;
  left: 50%;
  display: flex;
  align-items: center;
  gap: 9px;
  height: 30px;
  margin-left: -144px;
  padding: 0 3px 0 4px;
  background: #f1f1f1;
}
.navbar svg { width: 19px; height: 20px; }
.navbar button { margin-right: 4px; }
.navbar .wide { gap: 7px; margin: 0; }
.navbar .tight { gap: 3px; margin: 0; }

.statusbar {
  flex: none;
  display: flex;
  align-items: flex-end;
  justify-content: flex-end;
  height: 15px;
  padding-right: 290px;
  border-top: 1px solid #d3d3d3;
  background: #f0f0f0;
}
.statusbar span { width: 15px; height: 2px; background: #555; }
```
